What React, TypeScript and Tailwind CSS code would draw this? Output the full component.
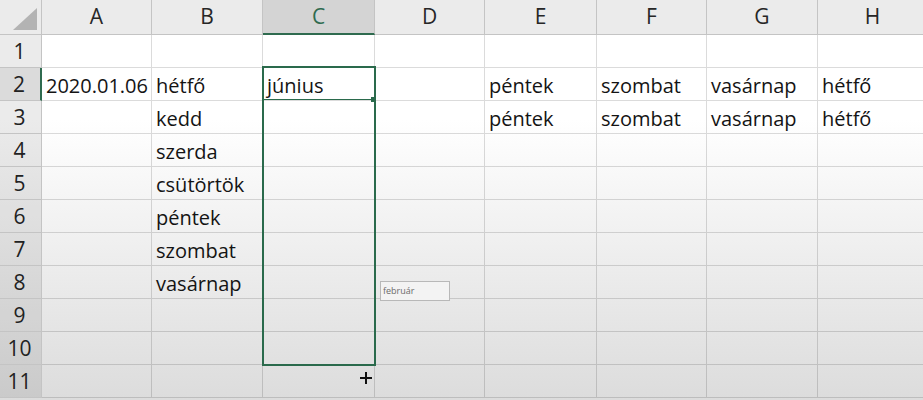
import React from "react";

const cols = ["A", "B", "C", "D", "E", "F", "G", "H"];

type CellData = { text: string; align?: "left" | "right" };

const data: Record<string, CellData> = {
  A2: { text: "2020.01.06", align: "right" },
  B2: { text: "hétfő" },
  C2: { text: "június" },
  E2: { text: "péntek" },
  F2: { text: "szombat" },
  G2: { text: "vasárnap" },
  H2: { text: "hétfő" },
  B3: { text: "kedd" },
  E3: { text: "péntek" },
  F3: { text: "szombat" },
  G3: { text: "vasárnap" },
  H3: { text: "hétfő" },
  B4: { text: "szerda" },
  B5: { text: "csütörtök" },
  B6: { text: "péntek" },
  B7: { text: "szombat" },
  B8: { text: "vasárnap" },
};

export default function App() {
  const rows = Array.from({ length: 11 }, (_, i) => i + 1);
  return (
    <div
      className="relative w-[923px] h-[400px] overflow-hidden bg-linear-to-b from-white via-white via-30% to-[#dcdcdc] text-[#141414]"
      style={{ fontFamily: '"Open Sans", "Liberation Sans", sans-serif' }}
    >
      <div className="grid grid-cols-[42px_110px_111px_112px_110px_112px_110px_111px_110px] grid-rows-[35px_repeat(11,33px)]">
        {/* corner */}
        <div className="relative bg-black/[0.08] border-r border-b border-[#c4c4c4]">
          <div
            className="absolute right-[4px] bottom-[4px] w-[24px] h-[22px] bg-[#b3b3b3]"
            style={{ clipPath: "polygon(100% 0, 100% 100%, 0 100%)" }}
          />
        </div>
        {cols.map((c) => (
          <div
            key={c}
            className={
              c === "C"
                ? "flex items-center justify-center bg-black/[0.17] border-r border-[#c4c4c4] border-b-2 border-b-[#2f6b4f] text-[21px] text-[#2f6b4f]"
                : "flex items-center justify-center bg-black/[0.08] border-r border-b border-[#c4c4c4] text-[21px] text-[#262626]"
            }
          >
            {c}
          </div>
        ))}
        {rows.map((r) => (
          <React.Fragment key={r}>
            <div
              className={
                r === 2
                  ? "flex items-center justify-center pr-[2px] pt-[2px] bg-black/[0.14] border-r-2 border-r-[#2f6b4f] border-b border-[#c4c4c4] text-[21px] text-[#222]"
                  : "flex items-center justify-center pr-[2px] pt-[2px] bg-black/[0.08] border-r border-b border-[#c4c4c4] text-[21px] text-[#222]"
              }
            >
              {r}
            </div>
            {cols.map((c) => {
              const d = data[c + r];
              return (
                <div
                  key={c + r}
                  className={
                    "flex items-center pt-[3px] border-r border-b border-black/[0.14] text-[20px] whitespace-nowrap overflow-visible " +
                    (d?.align === "right" ? "justify-end pr-[3px]" : "pl-[4px]")
                  }
                >
                  {d?.text ?? ""}
                </div>
              );
            })}
          </React.Fragment>
        ))}
      </div>

      {/* selection box */}
      <div className="absolute left-[262px] top-[66px] w-[114px] h-[300px] border-2 border-[#2a6a4c]" />
      {/* active cell bottom edge and handle */}
      <div className="absolute left-[264px] top-[99px] w-[110px] h-[1px] bg-[#2a6a4c]" />
      <div className="absolute left-[371px] top-[97px] w-[5px] h-[5px] bg-[#2a6a4c]" />

      {/* autofill tooltip */}
      <div className="absolute left-[380px] top-[281px] w-[70px] h-[20px] border border-[#b8b8b8] bg-[#f3f3f3] flex items-center pl-[2px] text-[9px] text-[#6b6b6b]">
        február
      </div>

      {/* fill cursor */}
      <div className="absolute left-[360px] top-[372px] w-[12px] h-[12px]">
        <div className="absolute left-[5px] top-0 w-[2px] h-[12px] bg-[#111]" />
        <div className="absolute left-0 top-[5px] w-[12px] h-[2px] bg-[#111]" />
      </div>
    </div>
  );
}
